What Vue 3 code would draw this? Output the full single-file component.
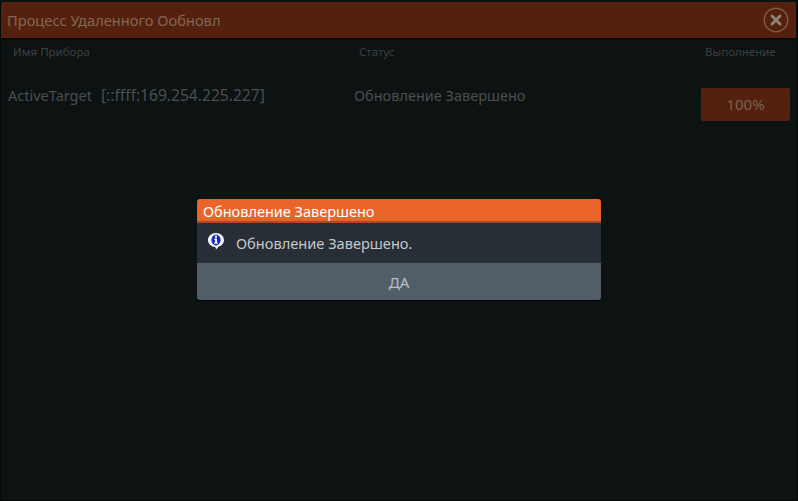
<template>
  <div class="screen">
    <header class="titlebar">
      <span class="title">Процесс Удаленного Ообновл</span>
      <svg class="close" viewBox="0 0 26 26" width="26" height="26">
        <circle cx="13" cy="13" r="11.7" fill="none" stroke="#7c5a45" stroke-width="1.4" />
        <path d="M9 9 L17 17 M17 9 L9 17" stroke="#8f7f75" stroke-width="3" stroke-linecap="round" />
      </svg>
    </header>
    <div class="columns">
      <span class="col-name">Имя Прибора</span>
      <span class="col-status">Статус</span>
      <span class="col-progress">Выполнение</span>
    </div>
    <div class="row">
      <span class="cell-name"><span>ActiveTarget</span><span class="address">[::ffff:169.254.225.227]</span></span>
      <span class="cell-status">Обновление Завершено</span>
      <span class="cell-progress">100%</span>
    </div>
    <div class="dialog">
      <div class="dialog-title">Обновление Завершено</div>
      <div class="dialog-body">
        <svg class="info" viewBox="0 0 18 19" width="18" height="19">
          <path d="M9 1 C13.4 1 17 4.1 17 8 C17 11.3 14.6 13.8 11.6 14.6 L9.2 17.6 L8.2 14.9 C4.2 14.7 1 11.8 1 8 C1 4.1 4.6 1 9 1 Z" fill="#f4f6fa" />
          <ellipse cx="9" cy="8" rx="4.6" ry="5.4" fill="#1428b8" />
          <rect x="8" y="3.6" width="2" height="2" fill="#fff" />
          <path d="M7.3 6.6 H10 V10.6 H10.9 V11.8 H7.2 V10.6 H8.1 V7.7 H7.3 Z" fill="#fff" />
        </svg>
        <span>Обновление Завершено.</span>
      </div>
      <button class="dialog-btn">ДА</button>
    </div>
  </div>
</template>

<script setup>
</script>

<style>
html, body { margin: 0; background: #0d1213; }
</style>

<style scoped>
.screen {
  position: relative;
  width: 798px;
  height: 501px;
  box-sizing: border-box;
  padding-top: 2px;
  overflow: hidden;
  background: #0d1213;
  font-family: "Noto Sans", "DejaVu Sans", sans-serif;
  border-left: 1px solid #06090a;
  border-right: 1px solid #06090a;
  border-bottom: 1px solid #06090a;
}
.titlebar {
  height: 36px;
  margin-right: 1px;
  padding: 0 6px;
  display: flex;
  align-items: center;
  justify-content: space-between;
  background: #54210f;
  box-shadow: 0 1px 2px #000;
  border-radius: 2px 2px 0 0;
}
.title { color: #826757; font-size: 14.66px; }
.close { margin-right: 1px; }
.columns {
  display: grid;
  grid-template-columns: 346px 346px 1fr;
  padding: 6px 0 0 12px;
  height: 24px;
  font-size: 11.5px;
  line-height: 16px;
  color: #3c4142;
}
.row {
  display: grid;
  grid-template-columns: 346px 346px 1fr;
  padding: 17px 0 0 7px;
  font-size: 14.5px;
  line-height: 20px;
  color: #4a4f50;
}
.cell-name { display: flex; gap: 9px; }
.address { font-size: 15.6px; }
.cell-progress {
  width: 89px;
  height: 33px;
  margin-top: 3px;
  margin-left: 1px;
  font-size: 15px;
  line-height: 33px;
  text-align: center;
  border-radius: 2px;
  background: #54210f;
  color: #78604f;
}
.dialog {
  position: absolute;
  left: 196px;
  top: 199px;
  width: 404px;
  border-radius: 3px;
  overflow: hidden;
  box-shadow: 0 1px 1px #000;
}
.dialog-title {
  height: 24px;
  line-height: 25px;
  padding-left: 6px;
  font-size: 14.5px;
  color: #fff;
  background: #e9652a;
  box-shadow: inset 0 -2px 1px #a84b20;
}
.dialog-body {
  height: 40px;
  display: flex;
  align-items: center;
  gap: 11px;
  padding-left: 10px;
  background: #272e35;
  color: #c4c8cb;
  font-size: 14.6px;
}
.info { margin-top: -4px; }
.dialog-btn {
  display: block;
  width: 100%;
  height: 37px;
  padding: 0;
  border: 0;
  background: #515e68;
  color: #b8bdc0;
  font: inherit;
  font-size: 15px;
}
</style>
